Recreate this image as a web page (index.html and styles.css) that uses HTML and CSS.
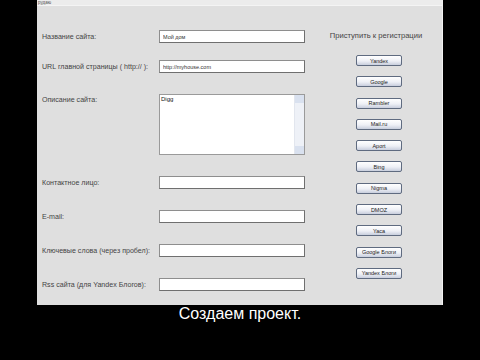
FILE: index.html
```html
<!DOCTYPE html>
<html lang="ru">
<head>
    <meta charset="UTF-8">
    <title>Регистрация сайта</title>
    <link rel="stylesheet" href="styles.css">
</head>
<body>
    <div class="screen">
        <div class="window">
            <div class="caption">рудаю</div>
            <div class="content">
                <div class="form">
                    <div class="row">
                        <label>Название сайта:</label>
                        <input type="text" value="Мой дом">
                    </div>
                    <div class="row">
                        <label>URL главной страницы ( http:// ):</label>
                        <input type="text" value="http://myhouse.com">
                    </div>
                    <div class="row row-top">
                        <label>Описание сайта:</label>
                        <div class="memo">
                            <div class="memo-text">Digg</div>
                            <div class="memo-scroll">
                                <span class="arrow"></span>
                                <span class="arrow"></span>
                            </div>
                        </div>
                    </div>
                    <div class="row">
                        <label>Контактное лицо:</label>
                        <input type="text">
                    </div>
                    <div class="row">
                        <label>E-mail:</label>
                        <input type="text">
                    </div>
                    <div class="row">
                        <label>Ключевые слова (через пробел):</label>
                        <input type="text">
                    </div>
                    <div class="row">
                        <label>Rss сайта (для Yandex Блогов):</label>
                        <input type="text">
                    </div>
                </div>
                <div class="side">
                    <div class="side-title">Приступить к регистрации</div>
                    <div class="buttons">
                        <button>Yandex</button>
                        <button>Google</button>
                        <button>Rambler</button>
                        <button>Mail.ru</button>
                        <button>Aport</button>
                        <button>Bing</button>
                        <button>Nigma</button>
                        <button>DMOZ</button>
                        <button>Yaca</button>
                        <button>Google Блоги</button>
                        <button>Yandex Блоги</button>
                    </div>
                </div>
            </div>
        </div>
        <div class="subtitle">Создаем проект.</div>
    </div>
</body>
</html>
```

FILE: styles.css
```css
body {
    margin: 0;
    background: #000;
    font-family: "Liberation Sans", Arial, sans-serif;
}

.screen {
    width: 480px;
    height: 360px;
    overflow: hidden;
}

.window {
    margin-left: 37px;
    width: 406px;
    height: 305px;
    background: #dfdfdf;
    border-right: 1px solid #f2f2f2;
    box-sizing: border-box;
}

.caption {
    height: 5px;
    background: #ececec;
    border-bottom: 1px solid #f4f4f4;
    font-size: 4.5px;
    line-height: 5px;
    color: #555;
    padding-left: 1px;
}

.content {
    display: flex;
    padding: 24px 0 0 5px;
}

.form {
    width: 268px;
    display: flex;
    flex-direction: column;
    gap: 21px;
}

.row {
    display: flex;
    align-items: center;
    height: 13px;
}

.row:first-child {
    margin-bottom: -4px;
}

.row-top {
    align-items: flex-start;
    height: 61px;
}

label {
    width: 117px;
    font-size: 7.1px;
    color: #444;
    white-space: nowrap;
}

.row-top label {
    padding-top: 2px;
}

input[type="text"] {
    width: 146px;
    height: 13px;
    box-sizing: border-box;
    border: 1px solid #8e8e8e;
    border-right-color: #6f6f6f;
    border-bottom-color: #6f6f6f;
    background: #fff;
    padding: 0 3px;
    font-family: "Liberation Sans", Arial, sans-serif;
    font-size: 5.5px;
    color: #333;
    margin: 0;
}

.memo {
    width: 146px;
    height: 61px;
    box-sizing: border-box;
    border: 1px solid #9a9a9a;
    background: #fff;
    display: flex;
}

.memo-text {
    flex: 1;
    font-size: 6px;
    color: #111;
    padding: 1px 0 0 1px;
    line-height: 7px;
}

.memo-scroll {
    width: 9px;
    background: #eef1f7;
    border-left: 1px solid #e2e6ee;
    display: flex;
    flex-direction: column;
    justify-content: space-between;
}

.arrow {
    height: 8px;
    background: #d9e1ef;
}

.side {
    flex: 1;
    display: flex;
    flex-direction: column;
    align-items: center;
}

.side-title {
    font-size: 7.6px;
    line-height: 9px;
    color: #444;
    white-space: nowrap;
    margin-top: 1px;
}

.buttons {
    display: flex;
    flex-direction: column;
    align-items: center;
    gap: 10.3px;
    margin-top: 15px;
    padding-left: 6px;
}

button {
    width: 46px;
    height: 11px;
    margin: 0;
    padding: 0;
    border: 1px solid #5f6b80;
    border-radius: 2px;
    background: linear-gradient(#ffffff, #eef0f6 55%, #c8cedd);
    font-family: "Liberation Sans", Arial, sans-serif;
    font-size: 5.5px;
    color: #222;
    white-space: nowrap;
    overflow: hidden;
}

.subtitle {
    text-align: center;
    color: #fff;
    font-size: 16px;
    line-height: 18px;
    padding-left: 0;
}
```
